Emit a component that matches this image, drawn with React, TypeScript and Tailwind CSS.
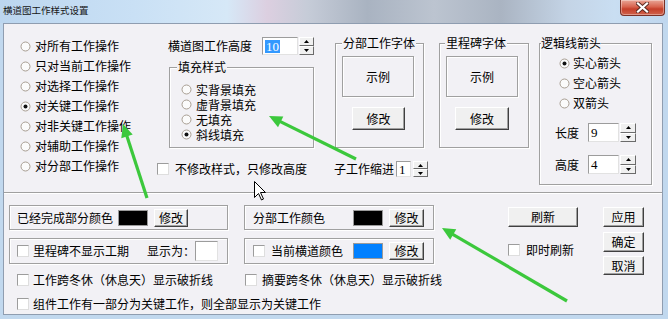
import React from 'react';
import clsx from 'clsx';

// 经典 Win32 控件的几个小零件
function RadioDot({ checked }: { checked?: boolean }) {
  return (
    <svg width="11" height="11" viewBox="0 0 11 11" className="shrink-0">
      <circle cx="5.5" cy="5.5" r="4.5" fill="#fbfbfb" stroke="#a89e93" />
      {checked && <circle cx="5.5" cy="5.5" r="2" fill="#111" />}
    </svg>
  );
}

function Radio({ label, checked, className, gap = 'ml-[4px]' }: { label: string; checked?: boolean; className?: string; gap?: string }) {
  return (
    <div className={clsx('flex items-center', className)}>
      <RadioDot checked={checked} />
      <span className={clsx('leading-[14px] whitespace-nowrap', gap)}>{label}</span>
    </div>
  );
}

function Box() {
  return <div className="w-[12px] h-[12px] shrink-0 bg-white border border-t-[#9c9c9c] border-l-[#9c9c9c] border-r-[#dedede] border-b-[#dedede]" />;
}

function Btn({ children, className }: { children: React.ReactNode; className?: string }) {
  return (
    <div className={clsx('flex items-center justify-center leading-[14px] bg-[#f0f0f0] border border-t-white border-l-white border-r-[#404040] border-b-[#404040] shadow-[inset_-1px_-1px_0_#a0a0a0]', className)}>
      {children}
    </div>
  );
}

function SpinHalf({ up }: { up?: boolean }) {
  return (
    <div className="flex-1 flex items-center justify-center bg-[#f0f0f0] border border-t-white border-l-white border-r-[#6b6b6b] border-b-[#6b6b6b]">
      <svg width="5" height="3" viewBox="0 0 5 3">
        <path d={up ? 'M2.5 0L5 3H0Z' : 'M0 0H5L2.5 3Z'} fill="#000" />
      </svg>
    </div>
  );
}

function Spin({ className }: { className?: string }) {
  return (
    <div className={clsx('flex flex-col', className)}>
      <SpinHalf up />
      <SpinHalf />
    </div>
  );
}

function Edit({ children, className }: { children?: React.ReactNode; className?: string }) {
  return (
    <div className={clsx('flex items-center pl-[2px] bg-white border border-t-[#9c9c9c] border-l-[#9c9c9c] border-r-[#e2e2e2] border-b-[#e2e2e2] font-["Liberation_Serif",serif] text-[13px] leading-none', className)}>
      {children}
    </div>
  );
}

function Group({ title, legend, className, children }: { title: string; legend: string; className?: string; children?: React.ReactNode }) {
  return (
    <div className={clsx('relative border border-[#a0a0a0] shadow-[inset_1px_1px_0_#fff,1px_1px_0_#fff]', className)}>
      <span className={clsx('absolute top-[-8px] bg-[#f2f1f5] leading-[14px] whitespace-nowrap', legend)}>{title}</span>
      {children}
    </div>
  );
}

function Etched({ className, children }: { className?: string; children?: React.ReactNode }) {
  return (
    <div className={clsx('flex items-center border border-[#a0a0a0] shadow-[inset_1px_1px_0_#fff,1px_1px_0_#fff]', className)}>
      {children}
    </div>
  );
}

function Swatch({ className }: { className: string }) {
  return <div className={clsx('w-[30px] h-[16px] border border-[#9a9a9a]', className)} />;
}

// 绿色标注箭头
function Arrow({ from, to }: { from: [number, number]; to: [number, number] }) {
  const dx = to[0] - from[0];
  const dy = to[1] - from[1];
  const len = Math.hypot(dx, dy);
  const ux = dx / len;
  const uy = dy / len;
  const bx = to[0] - ux * 13;
  const by = to[1] - uy * 13;
  const pts = `${to[0]},${to[1]} ${bx - uy * 6},${by + ux * 6} ${bx + uy * 6},${by - ux * 6}`;
  return (
    <g>
      <line x1={from[0]} y1={from[1]} x2={bx + ux * 2} y2={by + uy * 2} stroke="#3cc83c" strokeWidth="3.2" />
      <polygon points={pts} fill="#3cc83c" />
    </g>
  );
}

export default function App() {
  return (
    <div className="relative w-[668px] h-[319px] overflow-hidden bg-[#c1d8ee] font-['Noto_Sans_CJK_SC','Noto_Sans',sans-serif] text-[12px] text-black">
      {/* 标题栏 */}
      <div className="h-[23px] flex items-start bg-[linear-gradient(90deg,#bcd6ef_0%,#c9e0f5_20%,#d6e8f7_34%,#dccfe0_40%,#c6ccd8_46%,#a9b3c1_55%,#bcc4d0_65%,#aab4c2_75%,#c4d4e6_85%,#c9def2_92%,#bfd6ee_100%)]">
        <span className="ml-[3px] mt-[3px] text-[9.5px] leading-[14px] text-[#161616]">横道图工作样式设置</span>
        <div className="ml-auto mr-[3px] w-[45px] h-[16px] flex items-center justify-center rounded-b-[4px] border border-t-0 border-[#7a3026] bg-[linear-gradient(180deg,#e9a697_0%,#d8644f_45%,#c53f2a_60%,#d0634d_100%)] shadow-[inset_0_0_0_1px_rgba(255,255,255,0.35)]">
          <svg width="13" height="11" viewBox="0 0 13 11">
            <path d="M2 1.5L11 9.5M11 1.5L2 9.5" stroke="#5a2a22" strokeWidth="4" strokeLinecap="square" />
            <path d="M2 1.5L11 9.5M11 1.5L2 9.5" stroke="#fff" strokeWidth="2.2" strokeLinecap="square" />
          </svg>
        </div>
      </div>

      {/* 客户区 */}
      <div className="ml-[3px] w-[660px] h-[292px] border border-[#8f9db0] bg-[#f2f1f5] flex flex-col">
        {/* 上半部分 */}
        <div className="h-[169px] shrink-0 flex items-start border-b border-[#a0a0a0] shadow-[0_1px_0_#fff]">
          {/* 操作范围 */}
          <div className="w-[153px] shrink-0 pl-[16px] pt-[12px] flex flex-col">
            <Radio className="h-[20px]" label="对所有工作操作" />
            <Radio className="h-[20px]" label="只对当前工作操作" />
            <Radio className="h-[20px]" label="对选择工作操作" />
            <Radio className="h-[20px]" label="对关键工作操作" checked />
            <Radio className="h-[20px]" label="对非关键工作操作" />
            <Radio className="h-[20px]" label="对辅助工作操作" />
            <Radio className="h-[20px]" label="对分部工作操作" />
          </div>

          <div className="w-[382px] shrink-0 flex flex-col">
            <div className="flex items-start">
              <div className="w-[172px] shrink-0 pt-[13px] flex flex-col">
                <div className="flex items-center h-[18px]">
                  <span className="ml-[11px] w-[84px] leading-[14px]">横道图工作高度</span>
                  <Edit className="ml-[10px] w-[36px] h-[18px]">
                    <span className="bg-[#3399ff] text-white px-[1px]">10</span>
                  </Edit>
                  <Spin className="ml-[1px] w-[15px] h-[18px]" />
                </div>
                <Group title="填充样式" legend="left-[7px] px-[1px]" className="mt-[12px] ml-[12px] w-[145px] h-[81px] pt-[14px] pl-[11px]">
                  <Radio className="h-[15px]" label="实背景填充" />
                  <Radio className="h-[15px]" label="虚背景填充" />
                  <Radio className="h-[15px]" label="无填充" />
                  <Radio className="h-[15px]" label="斜线填充" checked />
                </Group>
              </div>

              <div className="ml-[6px] mt-[19px] flex">
                <Group title="分部工作字体" legend="left-[6px] px-[1px]" className="w-[89px] h-[105px] pt-[12px] pl-[6px]">
                  <div className="w-[72px] h-[41px] flex items-center justify-center border border-[#a0a0a0] shadow-[inset_1px_1px_0_#fff,1px_1px_0_#fff]">示例</div>
                  <Btn className="mt-[10px] ml-[10px] w-[53px] h-[23px]">修改</Btn>
                </Group>
                <Group title="里程碑字体" legend="left-[5px] px-[1px]" className="ml-[15px] w-[90px] h-[105px] pt-[12px] pl-[6px]">
                  <div className="w-[72px] h-[41px] flex items-center justify-center border border-[#a0a0a0] shadow-[inset_1px_1px_0_#fff,1px_1px_0_#fff]">示例</div>
                  <Btn className="mt-[10px] ml-[9px] w-[54px] h-[23px]">修改</Btn>
                </Group>
              </div>
            </div>

            <div className="mt-[13px] h-[16px] flex items-center">
              <Box />
              <span className="ml-[6px] leading-[14px] whitespace-nowrap">不修改样式，只修改高度</span>
              <span className="ml-[27px] leading-[14px] whitespace-nowrap">子工作缩进</span>
              <Edit className="ml-[2px] w-[15px] h-[16px]">1</Edit>
              <Spin className="ml-[2px] w-[15px] h-[16px]" />
            </div>
          </div>

          {/* 逻辑线箭头 */}
          <Group title="逻辑线箭头" legend="left-[1px]" className="mt-[19px] w-[113px] h-[142px] shrink-0 pt-[9px] flex flex-col">
            <div className="pl-[19px] flex flex-col">
              <Radio className="h-[20px]" gap="ml-[3px]" label="实心箭头" checked />
              <Radio className="h-[20px]" gap="ml-[3px]" label="空心箭头" />
              <Radio className="h-[20px]" gap="ml-[3px]" label="双箭头" />
            </div>
            <div className="mt-[10px] ml-[15px] h-[19px] flex items-center">
              <span className="w-[24px] leading-[14px]">长度</span>
              <Edit className="ml-[9px] w-[31px] h-[19px]">9</Edit>
              <Spin className="ml-[1px] w-[16px] h-[19px]" />
            </div>
            <div className="mt-[13px] ml-[15px] h-[19px] flex items-center">
              <span className="w-[24px] leading-[14px]">高度</span>
              <Edit className="ml-[9px] w-[31px] h-[19px]">4</Edit>
              <Spin className="ml-[1px] w-[16px] h-[19px]" />
            </div>
          </Group>
        </div>

        {/* 下半部分 */}
        <div className="flex items-start pl-[5px]">
          <div className="w-[435px] shrink-0 pt-[12px] flex flex-col">
            <div className="flex">
              <Etched className="w-[219px] h-[25px] pl-[7px]">
                <span className="w-[96px] leading-[14px]">已经完成部分颜色</span>
                <Swatch className="ml-[5px] bg-black" />
                <Btn className="ml-[6px] w-[34px] h-[18px]">修改</Btn>
              </Etched>
              <Etched className="ml-[16px] w-[190px] h-[25px] pl-[8px]">
                <span className="w-[72px] leading-[14px]">分部工作颜色</span>
                <Swatch className="ml-[28px] bg-black" />
                <Btn className="ml-[6px] w-[35px] h-[18px]">修改</Btn>
              </Etched>
            </div>
            <div className="mt-[8px] flex">
              <Etched className="w-[219px] h-[26px] pl-[7px]">
                <Box />
                <span className="ml-[4px] w-[96px] leading-[14px]">里程碑不显示工期</span>
                <span className="ml-[18px] w-[48px] leading-[14px]">显示为：</span>
                <div className="w-[23px] h-[20px] bg-white border border-t-[#9c9c9c] border-l-[#9c9c9c] border-r-[#e2e2e2] border-b-[#e2e2e2]" />
              </Etched>
              <Etched className="ml-[16px] w-[190px] h-[26px] pl-[8px]">
                <Box />
                <span className="ml-[6px] w-[72px] leading-[14px]">当前横道颜色</span>
                <Swatch className="ml-[10px] bg-[#0080ff]" />
                <Btn className="ml-[6px] w-[35px] h-[18px]">修改</Btn>
              </Etched>
            </div>
            <div className="mt-[8px] h-[16px] flex items-center">
              <div className="w-[236px] pl-[8px] flex items-center">
                <Box />
                <span className="ml-[4px] leading-[14px] whitespace-nowrap">工作跨冬休（休息天）显示破折线</span>
              </div>
              <Box />
              <span className="ml-[5px] leading-[14px] whitespace-nowrap">摘要跨冬休（休息天）显示破折线</span>
            </div>
            <div className="mt-[8px] h-[16px] pl-[8px] flex items-center">
              <Box />
              <span className="ml-[4px] leading-[14px] whitespace-nowrap">组件工作有一部分为关键工作，则全部显示为关键工作</span>
            </div>
          </div>

          <div className="ml-[64px] w-[70px] shrink-0 pt-[14px] flex flex-col">
            <Btn className="w-[70px] h-[20px]">刷新</Btn>
            <div className="mt-[16px] flex items-center">
              <Box />
              <span className="ml-[6px] leading-[14px] whitespace-nowrap">即时刷新</span>
            </div>
          </div>

          <div className="ml-[25px] w-[41px] shrink-0 pt-[14px] flex flex-col">
            <Btn className="h-[20px]">应用</Btn>
            <Btn className="mt-[5px] h-[20px]">确定</Btn>
            <Btn className="mt-[4px] h-[19px]">取消</Btn>
          </div>
        </div>
      </div>

      {/* 标注箭头与鼠标指针，叠在界面之上 */}
      <svg className="absolute left-0 top-0 pointer-events-none" width="668" height="319" viewBox="0 0 668 319">
        <Arrow from={[147, 198]} to={[123, 124]} />
        <Arrow from={[356, 159]} to={[269, 116]} />
        <Arrow from={[567, 301]} to={[442, 228]} />
        <path d="M254.5 181.5V197.5L258.5 193.5L261.5 200L263.5 199L260.5 192.5H265.5Z" fill="#fff" stroke="#000" strokeWidth="1" />
      </svg>
    </div>
  );
}
